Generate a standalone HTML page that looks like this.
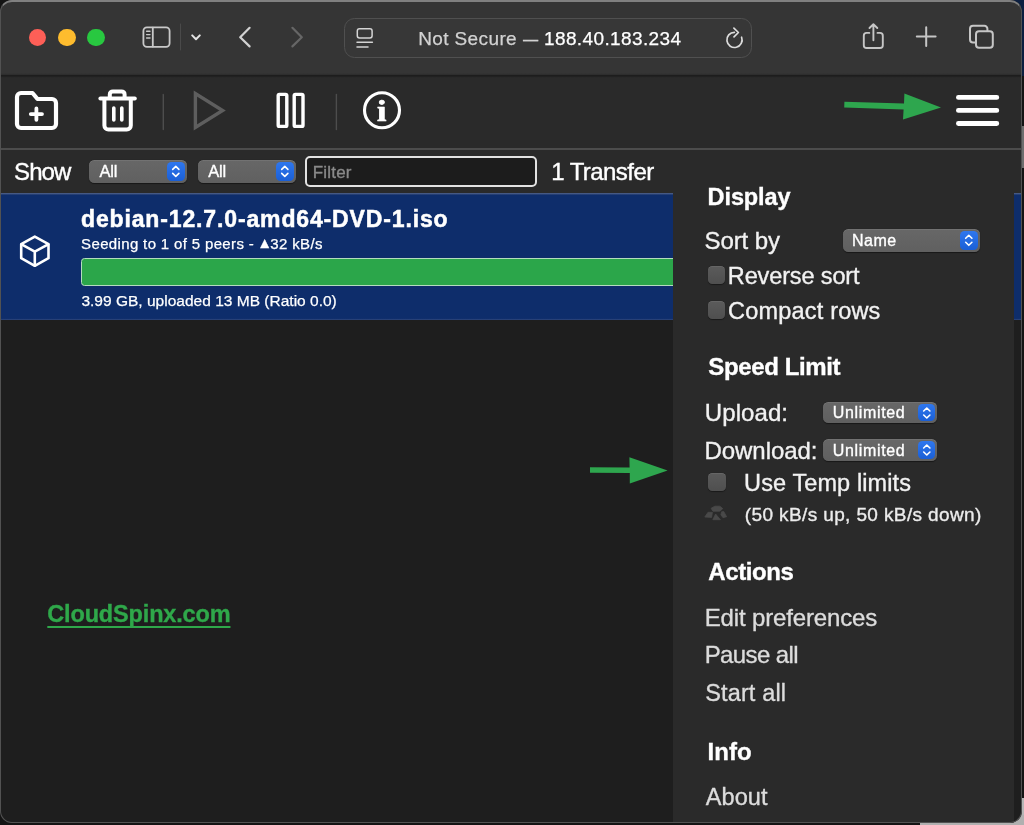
<!DOCTYPE html>
<html lang="en">
<head>
<meta charset="utf-8">
<title>Transmission Web Interface</title>
<style>
html,body{margin:0;padding:0;}
body{width:1024px;height:825px;overflow:hidden;background:#141414;font-family:"Liberation Sans",sans-serif;color:#fff;position:relative;}
.abs{position:absolute;}
.t{position:absolute;white-space:nowrap;line-height:1;}
#bd-tr{left:1004px;top:0;width:20px;height:76px;background:#0c1f40;}
#bd-right{left:1004px;top:798px;width:20px;height:27px;background:#b6b6b6;}
#bd-bottom{left:920px;top:815px;width:104px;height:10px;background:#b0b0b0;}
#bd-thumb{left:1020px;top:126px;width:4px;height:42px;background:#6e6e6e;}
#win{left:0;top:0;width:1022px;height:823px;border-radius:12px;background:#1e1e1e;overflow:hidden;}
#winborder{left:0;top:0;width:1020.2px;height:820.2px;border-radius:12px;border:1px solid #525252;border-top:2px solid #808080;}
#titlebar{left:0;top:0;width:1022px;height:74.5px;background:#353535;}
#tsep{left:0;top:72.6px;width:1022px;height:5.6px;background:linear-gradient(#353535 0,#2e2e2e 30%,#1b1b1b 52%,#1d1d1d 62%,#272727 82%,#2a2a2a 100%);}
#toolbar{left:0;top:76px;width:1022px;height:72.4px;background:#2a2a2a;}
#fsep{left:0;top:148.3px;width:1022px;height:1.3px;background:#4c4c4c;}
#filterbar{left:0;top:149.6px;width:1022px;height:43.6px;background:#2a2a2a;}
#row{left:0;top:193px;width:1022px;height:127px;background:linear-gradient(#56678c 0,#2b4377 1.3px,#0e2d6b 2.4px,#0e2d6b 125.4px,#33497c 127px);}
.light{position:absolute;width:17.4px;height:17.4px;border-radius:50%;top:29px;}
#addr{left:344.4px;top:17.8px;width:405.4px;height:38.2px;border-radius:10.5px;background:#373737;border:1px solid #505050;}
.sel{position:absolute;border-radius:5.5px;background:linear-gradient(#676767,#606060);box-shadow:0 0.5px 1px rgba(0,0,0,.45),inset 0 0.6px 0 rgba(255,255,255,.16);}
.sel .btn{position:absolute;right:2px;top:2px;bottom:2px;width:17.6px;border-radius:4.5px;background:linear-gradient(#2f77ee,#1a5fd6);}
.sel .btn svg{position:absolute;left:0;top:0;width:100%;height:100%;}
#filter{left:305px;top:155.5px;width:228.2px;height:27.4px;border:2px solid #e2e2e2;border-radius:5px;background:#1c1c1c;}
#menu{left:673.3px;top:149.6px;width:340.7px;height:680px;background:#2a2a2a;}
.cb{position:absolute;width:17.6px;height:18px;border-radius:4.5px;background:linear-gradient(#5b5b5b,#4f4f4f);box-shadow:inset 0 0.6px 0 rgba(255,255,255,.14),0 0.5px 1px rgba(0,0,0,.4);}
#prog{left:81.4px;top:257.5px;width:760px;height:26.6px;background:#2ba64a;border:1px solid #b4dcbe;border-radius:3.5px;}
</style>
</head>
<body>
<div class="abs" id="bd-tr"></div>
<div class="abs" id="bd-right"></div>
<div class="abs" id="bd-bottom"></div>
<div class="abs" id="bd-thumb"></div>

<div class="abs" id="win">
 <div class="abs" id="inner" style="left:0;top:0;width:1022px;height:824px;will-change:transform;">
  <div class="abs" id="titlebar"></div>
  <div class="light" style="left:29px;background:#fe5f57;"></div>
  <div class="light" style="left:58.2px;background:#febc2e;"></div>
  <div class="light" style="left:87.3px;background:#28c840;"></div>
  <div class="abs" id="addr"></div>
  <svg class="abs" id="ticons" style="left:0;top:0;" width="1024" height="76" viewBox="0 0 1024 76" fill="none" stroke-linecap="round" stroke-linejoin="round">
    <g stroke="#c9c9c9" stroke-width="1.8">
      <rect x="143.4" y="27.4" width="26.2" height="19.4" rx="3.5"/>
      <path d="M152.8 27.6V46.6"/>
      <path d="M146.6 31.2H150M146.6 34.6H150M146.6 38H150" stroke-width="1.4"/>
    </g>
    <path d="M180.5 24V50" stroke="#4a4a4a" stroke-width="1"/>
    <path d="M192.2 35.4L196 39.2L199.8 35.4" stroke="#e4e4e4" stroke-width="2"/>
    <path d="M249.6 27.8L240.2 37.2L249.6 46.4" stroke="#d2d2d2" stroke-width="2.2"/>
    <path d="M292.4 27.8L301.8 37.2L292.4 46.4" stroke="#666" stroke-width="2.2"/>
    <g stroke="#d4d4d4" stroke-width="1.5">
      <rect x="357.3" y="28.8" width="14.8" height="9.2" rx="2.2"/>
      <path d="M357 42.3H372.4M357 47.1H368"/>
    </g>
    <g stroke="#dcdcdc" stroke-width="1.7">
      <path d="M741.6 37.2A7.6 7.6 0 1 1 734.4 32.3"/>
      <path d="M733.9 28.2L738.4 32.5L734 36.8"/>
    </g>
    <g stroke="#c6c6c6" stroke-width="1.9">
      <path d="M869.3 32.9H866.6A2.8 2.8 0 0 0 863.8 35.7V45.2A2.8 2.8 0 0 0 866.6 48H880A2.8 2.8 0 0 0 882.8 45.2V35.7A2.8 2.8 0 0 0 880 32.9H877.5"/>
      <path d="M873.4 40.3V24.6M869.5 28L873.4 24.2L877.3 28"/>
    </g>
    <path d="M916.8 36.6H935.6M926.2 27.2V46" stroke="#c6c6c6" stroke-width="2"/>
    <g stroke="#c6c6c6" stroke-width="2">
      <path d="M975.4 42.6H973A3 3 0 0 1 970 39.6V28.8A3 3 0 0 1 973 25.8H984.4A3 3 0 0 1 987.4 28.8V30.6"/>
      <rect x="976" y="31.2" width="16.8" height="16.6" rx="3"/>
    </g>
  </svg>
  <span class="t" id="url" style="left:418.2px;top:29.0px;font-size:19.0px;font-weight:normal;color:#fff;letter-spacing:0.38px;-webkit-text-stroke:0.25px currentColor;"><span style="color:#d2d2d2">Not Secure <span style="display:inline-block;transform:scaleX(0.8);margin:0 -1.9px">—</span> </span>188.40.183.234</span>

  <div class="abs" id="toolbar"></div>
  <div class="abs" id="tsep"></div>
  <div class="abs" id="fsep"></div>
  <svg class="abs" id="tbicons" style="left:0;top:0;" width="1024" height="150" viewBox="0 0 1024 150" fill="none" stroke-linecap="round" stroke-linejoin="round">
    <g stroke="#fff" stroke-width="4.2">
      <path d="M17 97V124A4 4 0 0 0 21 128H52A4 4 0 0 0 56 124V103A4 4 0 0 0 52 99H37.5L32.5 93H21A4 4 0 0 0 17 97Z"/>
      <path d="M30.8 114.1H42M36.4 108.4V119.8" stroke-width="3.8"/>
    </g>
    <g stroke="#fff" stroke-width="4">
      <path d="M100.4 98.4H134.8"/>
      <path d="M109.8 97V94.4A3 3 0 0 1 112.8 91.4H121.6A3 3 0 0 1 124.6 94.4V97"/>
      <path d="M104.4 99.4V125.6A4 4 0 0 0 108.4 129.6H126.8A4 4 0 0 0 130.8 125.6V99.4"/>
      <path d="M113.8 108V120M121.8 108V120" stroke-width="3.6"/>
    </g>
    <path d="M163.3 94.5V129.5" stroke="#4d4d4d" stroke-width="1.4"/>
    <path d="M195.4 93.6V127.4L222.6 110.5Z" stroke="#5e5e5e" stroke-width="3.4" stroke-linejoin="miter"/>
    <g stroke="#fff" stroke-width="3.4">
      <rect x="278.2" y="94.4" width="8.6" height="32" rx="1.2"/>
      <rect x="294.2" y="94.4" width="8.8" height="32" rx="1.2"/>
    </g>
    <path d="M336.4 94.5V129.5" stroke="#4d4d4d" stroke-width="1.4"/>
    <circle cx="382" cy="110.2" r="17.5" stroke="#fff" stroke-width="3.1"/>
    <text transform="translate(381.7 121.1) scale(1.15 1)" x="0" y="0" text-anchor="middle" font-family="Liberation Serif, serif" font-weight="bold" font-size="29.5" fill="#fff" stroke="#fff" stroke-width="0.7">i</text>
    <path d="M844.4 101.8L904 103.4L904.4 93.4L941 107.6L903 119.6L903.6 109.4L844.2 107.6Z" fill="#2ea64e" stroke="none"/>
    <path d="M958.4 97.4H996.8M958.4 110.4H996.8M958.4 123.5H996.8" stroke="#fff" stroke-width="4.8"/>
  </svg>

  <div class="abs" id="filterbar"></div>
  <span class="t" id="show" style="left:14.1px;top:160.0px;font-size:24.0px;font-weight:normal;color:#fff;letter-spacing:-0.92px;-webkit-text-stroke:0.4px currentColor;">Show</span>
  <div class="sel" style="left:88.8px;top:160px;width:98.1px;height:22.6px;"><span class="btn"><svg viewBox="0 0 17.6 18.6" fill="none" stroke="#fff" stroke-width="1.6" stroke-linecap="round" stroke-linejoin="round"><path d="M5.7 7.4L8.8 4.4L11.9 7.4M5.7 11.4L8.8 14.4L11.9 11.4"/></svg></span></div>
  <div class="sel" style="left:197.7px;top:160px;width:98.1px;height:22.6px;"><span class="btn"><svg viewBox="0 0 17.6 18.6" fill="none" stroke="#fff" stroke-width="1.6" stroke-linecap="round" stroke-linejoin="round"><path d="M5.7 7.4L8.8 4.4L11.9 7.4M5.7 11.4L8.8 14.4L11.9 11.4"/></svg></span></div>
  <span class="t" id="s-all1" style="left:99.4px;top:163.0px;font-size:16.5px;font-weight:normal;color:#fff;letter-spacing:-0.15px;-webkit-text-stroke:0.35px currentColor;">All</span>
  <span class="t" id="s-all2" style="left:208.2px;top:163.0px;font-size:16.5px;font-weight:normal;color:#fff;letter-spacing:-0.14px;-webkit-text-stroke:0.35px currentColor;">All</span>
  <div class="abs" id="filter"></div>
  <span class="t" id="filterph" style="left:312.8px;top:164.0px;font-size:17.0px;font-weight:normal;color:#8a8a8a;letter-spacing:0.18px;-webkit-text-stroke:0.35px currentColor;">Filter</span>
  <span class="t" id="transfers" style="left:551.2px;top:160.0px;font-size:24.0px;font-weight:normal;color:#fff;letter-spacing:-0.56px;-webkit-text-stroke:0.4px currentColor;">1 Transfer</span>

  <div class="abs" id="row"></div>
  <svg class="abs" id="cube" style="left:0;top:0;" width="100" height="330" viewBox="0 0 100 330" fill="none" stroke="#fff" stroke-width="2.6" stroke-linecap="round" stroke-linejoin="round">
    <path d="M34.8 236.6L48.5 244.2V258.2L34.8 265.8L21.2 258.2V244.2Z"/>
    <path d="M21.6 244.4L34.8 251.6L48.2 244.4M34.8 251.6V265.4"/>
  </svg>
  <span class="t" id="tname" style="left:81.0px;top:208.0px;font-size:23.0px;font-weight:bold;color:#fff;letter-spacing:0.86px;-webkit-text-stroke:0.5px currentColor;">debian-12.7.0-amd64-DVD-1.iso</span>
  <span class="t" id="tpeers" style="left:81.1px;top:236.0px;font-size:15.0px;font-weight:normal;color:#fff;letter-spacing:0.35px;-webkit-text-stroke:0.25px currentColor;">Seeding to 1 of 5 peers - <span style="font-size:1.0em;position:relative;top:-1.5px;margin:0 -1.8px 0 -1.4px;letter-spacing:0">▲</span>32 kB/s</span>
  <div class="abs" id="prog"></div>
  <span class="t" id="tstat" style="left:81.4px;top:293.0px;font-size:15.5px;font-weight:normal;color:#fff;letter-spacing:0.01px;-webkit-text-stroke:0.25px currentColor;">3.99 GB, uploaded 13 MB (Ratio 0.0)</span>

  <span class="t" id="cloud" style="left:47.3px;top:603.0px;font-size:23.5px;font-weight:bold;color:#2fa84a;letter-spacing:-0.16px;text-decoration:underline;text-decoration-thickness:2px;text-underline-offset:3.6px;text-decoration-skip-ink:none;-webkit-text-stroke:0.35px currentColor;">CloudSpinx.com</span>
  <svg class="abs" id="arrow2" style="left:580px;top:450px;" width="100" height="40" viewBox="580 450 100 40"><path d="M590 467.2L629.6 467.6L629.4 457.2L667.6 470.4L629.8 483.4L629.8 473L590 472.8Z" fill="#2ea64e"/></svg>

  <div class="abs" id="menu"></div>
  <span class="t" id="m-display" style="left:707.6px;top:186.0px;font-size:23.5px;font-weight:bold;color:#fff;letter-spacing:-0.10px;-webkit-text-stroke:0.35px currentColor;">Display</span>
  <span class="t" id="m-sortby" style="left:704.6px;top:229.0px;font-size:24.0px;font-weight:normal;color:#f2f2f2;letter-spacing:-0.12px;-webkit-text-stroke:0.35px currentColor;">Sort by</span>
  <div class="sel" id="sel-name" style="left:842.5px;top:229.2px;width:137.5px;height:22.4px;"><span class="btn"><svg viewBox="0 0 17.6 18.4" fill="none" stroke="#fff" stroke-width="1.6" stroke-linecap="round" stroke-linejoin="round"><path d="M5.7 7.3L8.8 4.3L11.9 7.3M5.7 11.3L8.8 14.3L11.9 11.3"/></svg></span></div>
  <span class="t" id="s-name" style="left:852.1px;top:233.0px;font-size:16.0px;font-weight:normal;color:#fff;letter-spacing:0.42px;-webkit-text-stroke:0.35px currentColor;">Name</span>
  <div class="cb" id="cb1" style="left:707.9px;top:266px;"></div>
  <span class="t" id="m-reverse" style="left:727.8px;top:265.0px;font-size:23.5px;font-weight:normal;color:#f2f2f2;letter-spacing:-0.13px;-webkit-text-stroke:0.35px currentColor;">Reverse sort</span>
  <div class="cb" id="cb2" style="left:707.9px;top:301px;"></div>
  <span class="t" id="m-compact" style="left:728.1px;top:300.0px;font-size:23.5px;font-weight:normal;color:#f2f2f2;letter-spacing:0.19px;-webkit-text-stroke:0.35px currentColor;">Compact rows</span>
  <span class="t" id="m-speed" style="left:708.3px;top:355.0px;font-size:24.0px;font-weight:bold;color:#fff;letter-spacing:-0.37px;-webkit-text-stroke:0.35px currentColor;">Speed Limit</span>
  <span class="t" id="m-upload" style="left:704.8px;top:401.0px;font-size:24.0px;font-weight:normal;color:#f2f2f2;letter-spacing:0.08px;-webkit-text-stroke:0.35px currentColor;">Upload:</span>
  <div class="sel" id="sel-up" style="left:822.8px;top:401.6px;width:114.7px;height:21.8px;"><span class="btn"><svg viewBox="0 0 17.6 17.8" fill="none" stroke="#fff" stroke-width="1.6" stroke-linecap="round" stroke-linejoin="round"><path d="M5.7 7L8.8 4L11.9 7M5.7 11L8.8 14L11.9 11"/></svg></span></div>
  <span class="t" id="s-up" style="left:832.8px;top:405.0px;font-size:16.0px;font-weight:normal;color:#fff;letter-spacing:0.66px;-webkit-text-stroke:0.35px currentColor;">Unlimited</span>
  <span class="t" id="m-download" style="left:704.6px;top:439.0px;font-size:24.0px;font-weight:normal;color:#f2f2f2;letter-spacing:-0.08px;-webkit-text-stroke:0.35px currentColor;">Download:</span>
  <div class="sel" id="sel-down" style="left:822.8px;top:439.2px;width:114.7px;height:21.8px;"><span class="btn"><svg viewBox="0 0 17.6 17.8" fill="none" stroke="#fff" stroke-width="1.6" stroke-linecap="round" stroke-linejoin="round"><path d="M5.7 7L8.8 4L11.9 7M5.7 11L8.8 14L11.9 11"/></svg></span></div>
  <span class="t" id="s-down" style="left:832.8px;top:443.0px;font-size:16.0px;font-weight:normal;color:#fff;letter-spacing:0.66px;-webkit-text-stroke:0.35px currentColor;">Unlimited</span>
  <div class="cb" id="cb3" style="left:708px;top:473.2px;"></div>
  <span class="t" id="m-temp" style="left:744.1px;top:472.0px;font-size:23.5px;font-weight:normal;color:#f2f2f2;letter-spacing:0.10px;-webkit-text-stroke:0.35px currentColor;">Use Temp limits</span>
  <svg class="abs" id="turtle" style="left:700px;top:502px;" width="32" height="24" viewBox="700 502 32 24" fill="#494949" stroke="#494949" stroke-width="0.8" stroke-linejoin="round">
    <path d="M711.1 508.3L714.9 506.2H719.8L722.8 508.6L719.8 511.2H712.9Z"/>
    <path d="M708 512.3H712.4L711.6 517.4L704.8 517Z"/>
    <path d="M715.6 514L720.4 519.7H712.8Z"/>
    <path d="M721.6 511.8L723.7 511.5L726.6 516.7L723 517.7L720.9 514.8Z"/>
  </svg>
  <span class="t" id="m-limits" style="left:744.8px;top:505.0px;font-size:19.0px;font-weight:normal;color:#ececec;letter-spacing:0.38px;-webkit-text-stroke:0.35px currentColor;">(50 kB/s up, 50 kB/s down)</span>
  <span class="t" id="m-actions" style="left:708.3px;top:560.0px;font-size:24.0px;font-weight:bold;color:#fff;letter-spacing:-0.40px;-webkit-text-stroke:0.35px currentColor;">Actions</span>
  <span class="t" id="m-edit" style="left:704.7px;top:606.0px;font-size:24.0px;font-weight:normal;color:#dcdcdc;letter-spacing:-0.15px;-webkit-text-stroke:0.35px currentColor;">Edit preferences</span>
  <span class="t" id="m-pause" style="left:704.7px;top:643.0px;font-size:24.0px;font-weight:normal;color:#dcdcdc;letter-spacing:-0.59px;-webkit-text-stroke:0.35px currentColor;">Pause all</span>
  <span class="t" id="m-start" style="left:705.2px;top:682.0px;font-size:23.5px;font-weight:normal;color:#dcdcdc;letter-spacing:0.14px;-webkit-text-stroke:0.35px currentColor;">Start all</span>
  <span class="t" id="m-info" style="left:707.5px;top:740.0px;font-size:24.0px;font-weight:bold;color:#fff;letter-spacing:0.07px;-webkit-text-stroke:0.35px currentColor;">Info</span>
  <span class="t" id="m-about" style="left:705.8px;top:786.0px;font-size:23.5px;font-weight:normal;color:#dcdcdc;letter-spacing:0.05px;-webkit-text-stroke:0.35px currentColor;">About</span>
 </div>
</div>
<div class="abs" id="winborder"></div>
</body>
</html>
